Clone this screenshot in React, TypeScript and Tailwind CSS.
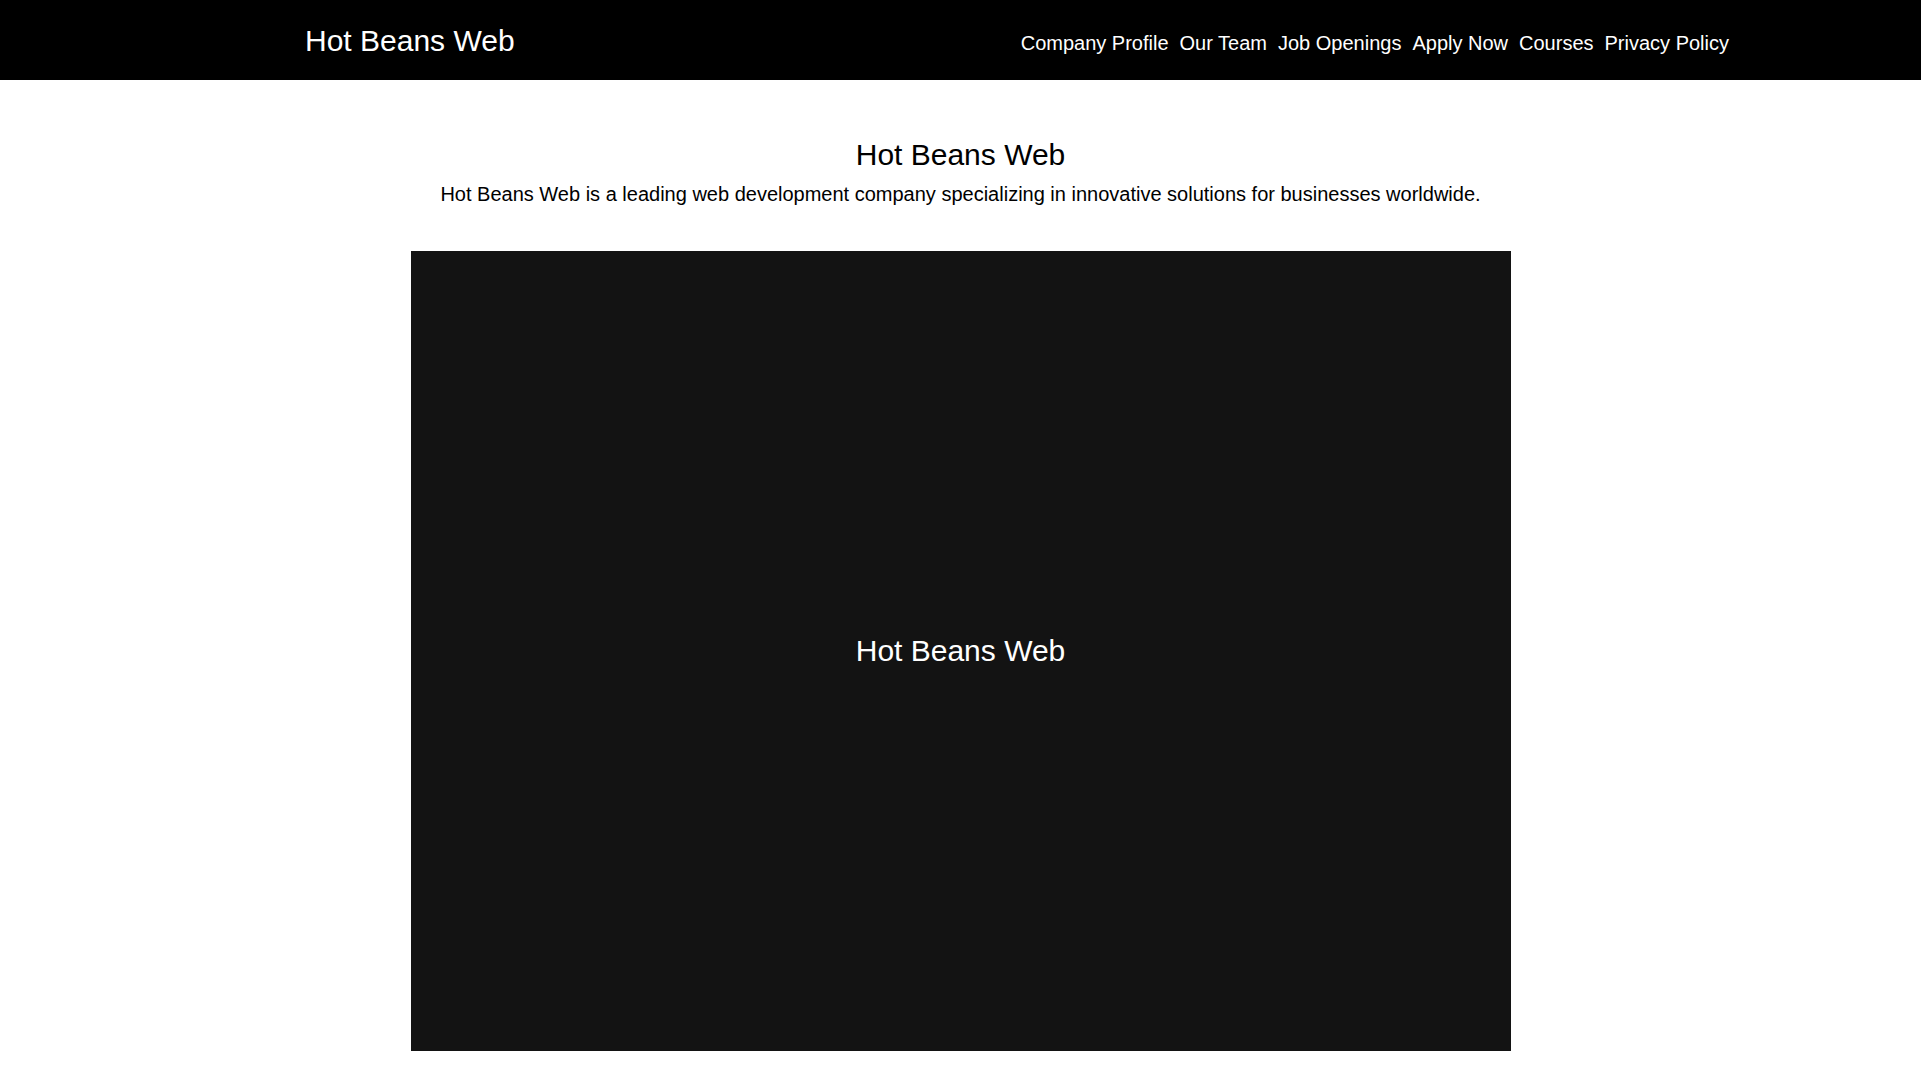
export default function App() {
  const links = ["Company Profile", "Our Team", "Job Openings", "Apply Now", "Courses", "Privacy Policy"];

  return (
    <div className="min-h-screen bg-white text-black font-['Liberation_Sans',Arial,sans-serif]">
      <header className="h-[80px] w-full bg-black text-white flex items-start justify-between pl-[305px] pr-[192px]">
        <div className="pt-[24px] text-[30px] leading-[33px]">Hot Beans Web</div>
        <nav className="flex gap-[11px] pt-[32px] text-[20px] leading-[23px]">
          {links.map((l) => (
            <a key={l} href="#" className="text-white">
              {l}
            </a>
          ))}
        </nav>
      </header>

      <main className="pt-[58px] text-center">
        <h2 className="text-[30px] leading-[34px]">Hot Beans Web</h2>
        <p className="mt-[11px] text-[20px] leading-[23px]">
          Hot Beans Web is a leading web development company specializing in innovative solutions for businesses worldwide.
        </p>
        <div className="mx-auto mt-[45px] w-[1100px] h-[800px] bg-[#131313] flex items-center justify-center">
          <span className="text-white text-[30px] leading-[34px]">Hot Beans Web</span>
        </div>
      </main>
    </div>
  );
}
